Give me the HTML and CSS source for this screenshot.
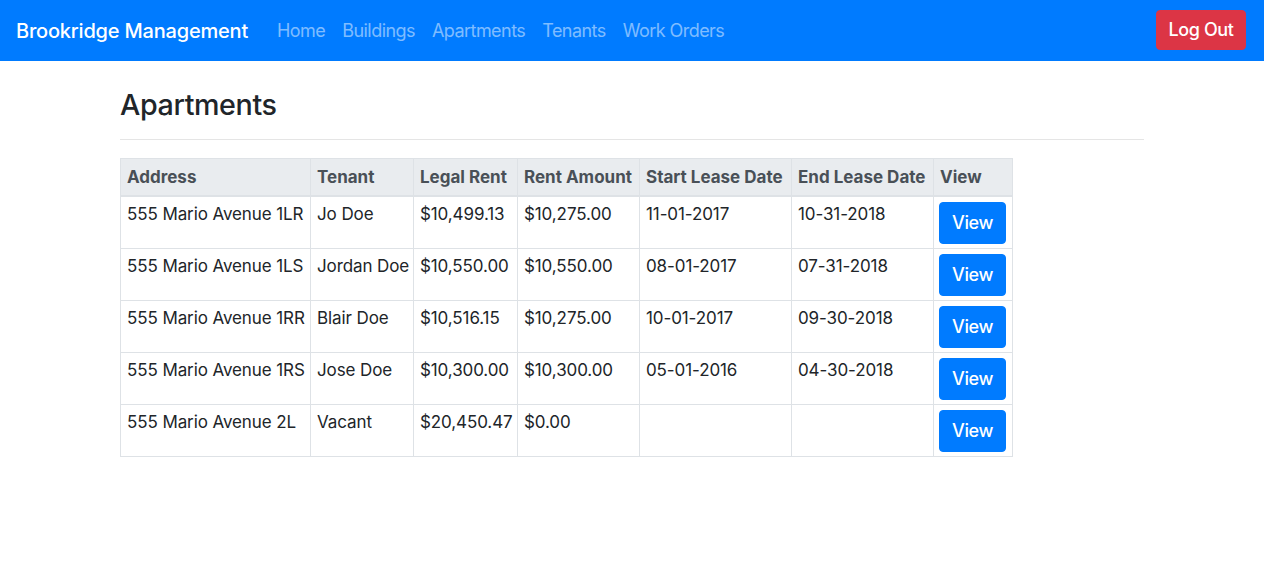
FILE: index.html
```html
<!DOCTYPE html>
<html>
<head>
<meta charset="utf-8">
<link rel="stylesheet" href="styles.css">
</head>
<body>
<nav class="navbar">
  <div class="nav-left">
    <a class="brand" href="#">Brookridge Management</a>
    <ul class="nav-links">
      <li><a href="#">Home</a></li>
      <li><a href="#">Buildings</a></li>
      <li><a href="#">Apartments</a></li>
      <li><a href="#">Tenants</a></li>
      <li><a href="#">Work Orders</a></li>
    </ul>
  </div>
  <button class="btn btn-danger">Log Out</button>
</nav>
<main class="container">
  <h2 class="title">Apartments</h2>
  <hr class="rule">
  <table class="apt-table">
    <colgroup>
      <col class="c-addr"><col class="c-tenant"><col class="c-legal"><col class="c-rent"><col class="c-start"><col class="c-end"><col class="c-view">
    </colgroup>
    <thead>
      <tr>
        <th>Address</th><th>Tenant</th><th>Legal Rent</th><th>Rent Amount</th><th>Start Lease Date</th><th>End Lease Date</th><th>View</th>
      </tr>
    </thead>
    <tbody>
      <tr><td>555 Mario Avenue 1LR</td><td>Jo Doe</td><td>$10,499.13</td><td>$10,275.00</td><td>11-01-2017</td><td>10-31-2018</td><td><button class="btn btn-primary">View</button></td></tr>
      <tr><td>555 Mario Avenue 1LS</td><td>Jordan Doe</td><td>$10,550.00</td><td>$10,550.00</td><td>08-01-2017</td><td>07-31-2018</td><td><button class="btn btn-primary">View</button></td></tr>
      <tr><td>555 Mario Avenue 1RR</td><td>Blair Doe</td><td>$10,516.15</td><td>$10,275.00</td><td>10-01-2017</td><td>09-30-2018</td><td><button class="btn btn-primary">View</button></td></tr>
      <tr><td>555 Mario Avenue 1RS</td><td>Jose Doe</td><td>$10,300.00</td><td>$10,300.00</td><td>05-01-2016</td><td>04-30-2018</td><td><button class="btn btn-primary">View</button></td></tr>
      <tr><td>555 Mario Avenue 2L</td><td>Vacant</td><td>$20,450.47</td><td>$0.00</td><td></td><td></td><td><button class="btn btn-primary">View</button></td></tr>
    </tbody>
  </table>
</main>
</body>
</html>
```
FILE: styles.css
```css
* { box-sizing: border-box; }
body {
  margin: 0;
  font-family: Inter, "Noto Sans", "Liberation Sans", sans-serif;
  font-size: 17px;
  line-height: 1.5;
  color: #212529;
  background: #fff;
}
.navbar {
  background: #007bff;
  height: 61px;
  display: flex;
  align-items: center;
  justify-content: space-between;
  padding: 0 18px 0 16px;
}
.nav-left { display: flex; align-items: center; }
.brand {
  color: #fff;
  text-decoration: none;
  font-size: 20px;
  font-weight: 500;
  margin-right: 29px;
  letter-spacing: -0.2px;
}
.nav-links {
  list-style: none;
  margin: 0;
  padding: 0;
  display: flex;
  gap: 17px;
}
.nav-links a {
  color: rgba(255,255,255,0.5);
  text-decoration: none;
  font-size: 18px;
  font-weight: 400;
  letter-spacing: -0.55px;
}
.btn {
  font-family: inherit;
  border: 1px solid transparent;
  border-radius: 4px;
  color: #fff;
  font-size: 18px;
  font-weight: 500;
  line-height: 1.5;
  cursor: pointer;
  letter-spacing: -0.4px;
}
.btn-danger {
  background: #dc3545;
  border-color: #dc3545;
  height: 40px;
  width: 90px;
  padding: 0;
  margin-bottom: 2px;
}
.btn-primary {
  background: #007bff;
  border-color: #007bff;
  height: 42px;
  width: 67px;
  padding: 0;
  display: block;
}
.container {
  width: 1024px;
  margin: 0 auto;
  padding-top: 26px;
}
.title {
  margin: 0;
  font-size: 28.7px;
  font-weight: 500;
  line-height: 35px;
  letter-spacing: -0.4px;
}
.rule {
  margin: 17px 0 18px;
  border: 0;
  border-top: 1px solid rgba(0,0,0,0.1);
}
.apt-table {
  border-collapse: collapse;
  table-layout: fixed;
  width: 892px;
  color: #212529;
}
.c-addr { width: 190px; }
.c-tenant { width: 103px; }
.c-legal { width: 104px; }
.c-rent { width: 122px; }
.c-start { width: 152px; }
.c-end { width: 142px; }
.c-view { width: 79px; }
.apt-table th, .apt-table td {
  border: 1px solid #dee2e6;
  padding: 6px 6px;
  text-align: left;
  vertical-align: top;
  white-space: nowrap;
  overflow: hidden;
  letter-spacing: -0.1px;
}
.apt-table th {
  background: #e9ecef;
  color: #495057;
  font-weight: 700;
  padding: 6px 6px 4px;
  border-bottom-width: 2px;
  letter-spacing: 0;
}
.apt-table td { height: 52px; padding-top: 5px; }
.apt-table td:last-child { padding: 5px 6px 4px 5px; }
```
